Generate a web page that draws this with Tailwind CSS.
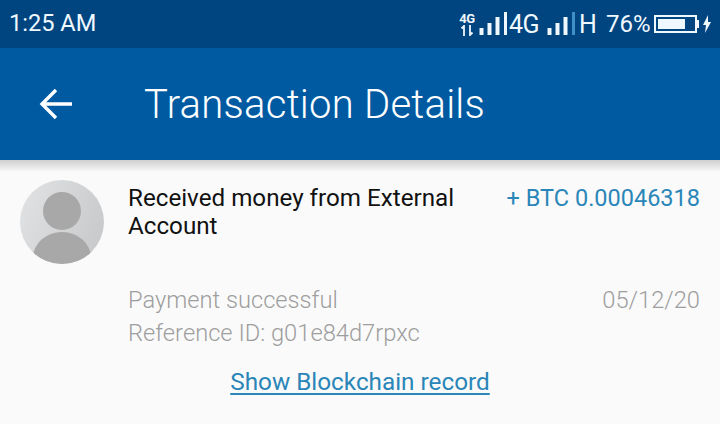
<!DOCTYPE html>
<html><head><meta charset="utf-8"><script src="https://cdn.jsdelivr.net/npm/@tailwindcss/browser@4"></script></head>
<body class="w-[720px] h-[424px] overflow-hidden bg-[#fafafa] font-['Roboto',sans-serif]">
<div class="h-12 bg-[#00457f] flex items-center justify-between pl-[9px] pr-[8px] text-[#f0f8ff]">
  <span class="text-[23.6px] leading-none">1:25 AM</span>
  <div class="flex items-center h-full">
    <div class="flex flex-col items-center w-[18px] mr-[3px] font-bold">
      <span class="text-[13px] leading-[13px] tracking-[-0.3px]">4G</span>
      <svg width="14" height="11" viewBox="0 0 14 11" fill="none" stroke="#f0f8ff" stroke-width="1.8"><path d="M4 11V1L1.5 3.5M10 0v10l2.5-2.5"/></svg>
    </div>
    <svg width="29" height="28" viewBox="0 0 29 28" fill="#f0f8ff"><rect x="0.5" y="18" width="4" height="7"/><rect x="8.5" y="13" width="4" height="12"/><rect x="16.5" y="7" width="4" height="18"/><rect x="25" y="2" width="3" height="23"/></svg>
    <span class="text-[25px] leading-none ml-[1px] w-[38px] tracking-[-0.5px]">4G</span>
    <svg width="29" height="28" viewBox="0 0 29 28" fill="#f0f8ff"><rect x="0.5" y="18" width="4" height="7"/><rect x="8.5" y="13" width="4" height="12"/><rect x="16.5" y="7" width="4" height="18"/><rect x="25" y="2" width="3" height="23" fill="#3f8fc9"/></svg>
    <span class="text-[25px] leading-none ml-[3px] w-[19px]">H</span>
    <span class="text-[24px] leading-none ml-[8px] w-[43px]">76%</span>
    <div class="ml-[5px] w-[43px] h-[18px] border-2 border-[#f0f8ff] p-[2px] flex"><div class="w-[27px] bg-[#f0f8ff]"></div></div>
    <div class="w-[2px] h-2 bg-[#f0f8ff]"></div>
    <svg width="10" height="20" viewBox="0 0 10 20" fill="#f0f8ff" class="ml-[3px]"><path d="M6 1 1 11h3l-1 8 6-11H6z"/></svg>
  </div>
</div>
<header class="h-[112px] bg-[#005aa2] flex items-center text-white">
  <svg width="34" height="32" viewBox="0 0 34 32" fill="none" stroke="white" stroke-width="3.4" class="ml-[39px]"><path d="M33 16H3M17 2 3 16l14 14"/></svg>
  <h1 class="ml-[71px] pt-[2px] text-[40px] font-light tracking-[0.25px] leading-none">Transaction Details</h1>
</header>
<div class="h-[12px] bg-gradient-to-b from-[#cfcfcf] to-[#fafafa]"></div>
<main class="px-5 pt-2">
  <div class="flex">
    <svg width="84" height="84" viewBox="0 0 84 84" class="shrink-0"><defs><clipPath id="c"><circle cx="42" cy="42" r="42"/></clipPath><linearGradient id="g" x1="0" y1="0" x2="1" y2="0.4"><stop offset="0" stop-color="#e2e3e4"/><stop offset="1" stop-color="#c9cbcd"/></linearGradient></defs><circle cx="42" cy="42" r="42" fill="url(#g)"/><g clip-path="url(#c)"><circle cx="42" cy="31" r="19" fill="#a8a8a8"/><ellipse cx="42" cy="78" rx="29" ry="26" fill="#a8a8a8"/></g></svg>
    <div class="ml-6 flex-1">
      <div class="flex justify-between pt-[4px]">
        <p class="w-[340px] text-[24.2px] leading-[28px] text-[#111]">Received money from External Account</p>
        <p class="text-[23.5px] leading-[28px] text-[#2a86b8]">+ BTC 0.00046318</p>
      </div>
      <div class="flex justify-between mt-[44px] text-[23.7px] leading-[33px] text-[#9e9e9e] font-light">
        <div><p>Payment successful</p><p>Reference ID: g01e84d7rpxc</p></div>
        <p>05/12/20</p>
      </div>
    </div>
  </div>
  <div class="text-center mt-[17px]"><a class="text-[24.3px] leading-[30px] text-[#2a86b8] underline underline-offset-[3px]">Show Blockchain record</a></div>
</main>
</body></html>
